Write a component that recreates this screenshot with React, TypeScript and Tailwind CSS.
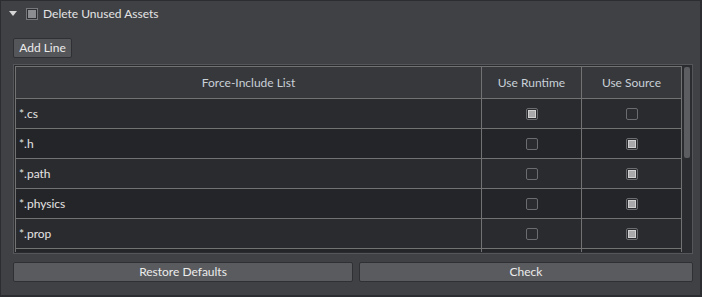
import React from 'react'

const rows = [
  { name: '*.cs', runtime: true, source: false },
  { name: '*.h', runtime: false, source: true },
  { name: '*.path', runtime: false, source: true },
  { name: '*.physics', runtime: false, source: true },
  { name: '*.prop', runtime: false, source: true },
]

function Check({ on }: { on: boolean }) {
  return (
    <div className="w-[12px] h-[12px] rounded-[2px] border border-[#6b6c70] bg-[#2b2c2f] flex items-center justify-center">
      {on && <div className="w-[8px] h-[8px] border border-[#d0d0d0] bg-[#a9a9ab]" />}
    </div>
  )
}

export default function App() {
  return (
    <div
      className="w-[702px] h-[297px] bg-[#404145] border border-[#2c2d30] border-r-2 border-b-2 flex flex-col text-[12px] text-[#e4e4e4]"
      style={{ fontFamily: 'Lato, "Noto Sans", sans-serif' }}
    >
      {/* Header */}
      <div className="h-[25px] flex items-center pl-[8px]">
        <svg width="8" height="5" viewBox="0 0 8 5" className="mr-[9px]">
          <path d="M0 0 H8 L4 5 Z" fill="#d6d6d6" />
        </svg>
        <div className="w-[12px] h-[12px] border border-[#77787c] bg-[#2e2f32] flex items-center justify-center mr-[5px]">
          <div className="w-[8px] h-[8px] bg-[#8c8d90]" />
        </div>
        <span className="leading-[16px]">Delete Unused Assets</span>
      </div>

      {/* Add Line */}
      <div className="mt-[12px] pl-[12px]">
        <button className="h-[20px] w-[59px] rounded-[2px] bg-[#55565a] border border-[#2f3033] leading-[18px] text-[#ececec]">
          Add Line
        </button>
      </div>

      {/* Table */}
      <div className="mt-[6px] ml-[12px] w-[680px] h-[190px] border border-[#55565a] bg-[#2a2b2e] p-[1px] flex overflow-hidden">
        <div className="w-[667px] border-l border-t border-[#727272] flex flex-col shrink-0">
          <div className="flex h-[32px] bg-[#37383c] text-[#c9d0d8] shrink-0">
            <div className="w-[466px] border-r border-b border-[#727272] flex items-center justify-center">Force-Include List</div>
            <div className="w-[100px] border-r border-b border-[#727272] flex items-center justify-center">Use Runtime</div>
            <div className="w-[100px] border-r border-b border-[#727272] flex items-center justify-center">Use Source</div>
          </div>
          {rows.map((r, i) => (
            <div key={r.name} className={`flex h-[30px] shrink-0 ${i % 2 === 0 ? 'bg-[#2a2b2e]' : 'bg-[#242528]'}`}>
              <div className="w-[466px] border-r border-b border-[#727272] flex items-center pl-[3px]">{r.name}</div>
              <div className="w-[100px] border-r border-b border-[#727272] flex items-center justify-center">
                <Check on={r.runtime} />
              </div>
              <div className="w-[100px] border-r border-b border-[#727272] flex items-center justify-center">
                <Check on={r.source} />
              </div>
            </div>
          ))}
          {/* partially visible next row */}
          <div className="flex flex-1 bg-[#242528]">
            <div className="w-[466px] border-r border-[#727272]" />
            <div className="w-[100px] border-r border-[#727272]" />
            <div className="w-[100px] border-r border-[#727272]" />
          </div>
        </div>
        {/* Scrollbar */}
        <div className="w-[10px] bg-[#2b2c2f] flex justify-center pt-[1px]">
          <div className="w-[6px] h-[91px] rounded-[2px] bg-[#5c5d61]" />
        </div>
      </div>

      {/* Bottom buttons */}
      <div className="mt-[8px] ml-[12px] flex gap-[6px]">
        <button className="w-[340px] h-[20px] rounded-[2px] bg-[#5a5b5f] border border-[#2f3033] leading-[18px] text-[#ececec]">
          Restore Defaults
        </button>
        <button className="w-[334px] h-[20px] rounded-[2px] bg-[#5a5b5f] border border-[#2f3033] leading-[18px] text-[#ececec]">
          Check
        </button>
      </div>
    </div>
  )
}
